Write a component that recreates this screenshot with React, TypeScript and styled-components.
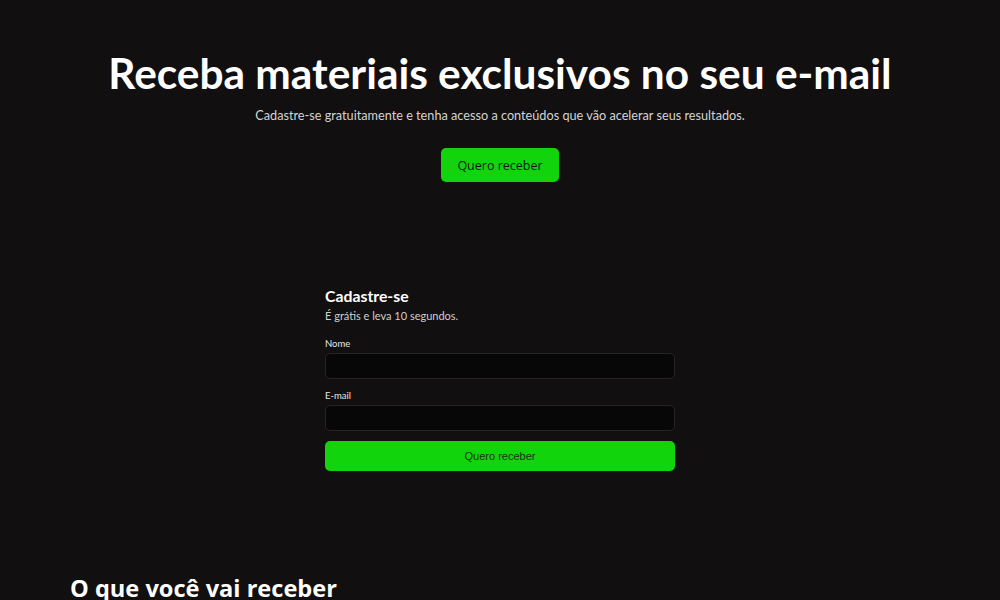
import React from 'react';
import styled, { createGlobalStyle } from 'styled-components';

const GlobalStyle = createGlobalStyle`
  html, body {
    margin: 0;
    padding: 0;
    background: #110f0f;
    color: #fff;
    font-family: 'Lato', 'Open Sans', sans-serif;
  }
`;

const Page = styled.div`
  height: 600px;
  overflow: hidden;
  background: #110f0f;
`;

const Hero = styled.section`
  display: flex;
  flex-direction: column;
  align-items: center;
  padding-top: 48px;
`;

const Title = styled.h1`
  margin: 0;
  font-family: 'Lato', sans-serif;
  font-weight: 700;
  font-size: 42.4px;
  line-height: 50px;
  color: #fff;
`;

const Lead = styled.p`
  margin: 8px 0 0;
  font-size: 12.7px;
  line-height: 18px;
  color: #d4d4d4;
`;

const HeroButton = styled.button`
  margin-top: 24px;
  width: 118px;
  height: 34px;
  border: none;
  border-radius: 5px;
  background: #12d40c;
  color: #0b1a0b;
  font-family: 'Open Sans', sans-serif;
  font-size: 12.5px;
  font-weight: 500;
  cursor: pointer;
`;

const FormSection = styled.section`
  width: 350px;
  margin: 103px auto 0;
`;

const FormTitle = styled.h2`
  margin: 0;
  font-size: 15.8px;
  line-height: 22px;
  font-weight: 700;
  color: #fff;
`;

const FormLead = styled.p`
  margin: 1px 0 0;
  font-size: 11px;
  line-height: 16px;
  color: #cfcfcf;
`;

const Fields = styled.form`
  display: flex;
  flex-direction: column;
  margin-top: 13px;
`;

const Label = styled.label`
  font-size: 9.5px;
  line-height: 13px;
  color: #e6e6e6;
  margin-bottom: 3px;
`;

const Input = styled.input`
  box-sizing: border-box;
  height: 26px;
  width: 100%;
  margin-bottom: 10px;
  background: #080707;
  border: 1px solid #262424;
  border-radius: 5px;
  color: #fff;
  padding: 0 8px;
  outline: none;
`;

const SubmitButton = styled.button`
  height: 30px;
  border: none;
  border-radius: 5px;
  background: #12d40c;
  color: #153015;
  font-family: 'Liberation Sans', Arial, sans-serif;
  font-size: 11px;
  cursor: pointer;
`;

const Benefits = styled.section`
  padding: 0 70px;
  margin-top: 101px;
`;

const BenefitsTitle = styled.h2`
  margin: 0;
  font-family: 'Open Sans', sans-serif;
  font-size: 23.6px;
  line-height: 32px;
  font-weight: 700;
  color: #fff;
`;

export default function App() {
  return (
    <Page>
      <GlobalStyle />
      <Hero>
        <Title>Receba materiais exclusivos no seu e-mail</Title>
        <Lead>Cadastre-se gratuitamente e tenha acesso a conteúdos que vão acelerar seus resultados.</Lead>
        <HeroButton type="button">Quero receber</HeroButton>
      </Hero>
      <FormSection>
        <FormTitle>Cadastre-se</FormTitle>
        <FormLead>É grátis e leva 10 segundos.</FormLead>
        <Fields onSubmit={(e) => e.preventDefault()}>
          <Label htmlFor="nome">Nome</Label>
          <Input id="nome" type="text" />
          <Label htmlFor="email">E-mail</Label>
          <Input id="email" type="email" />
          <SubmitButton type="submit">Quero receber</SubmitButton>
        </Fields>
      </FormSection>
      <Benefits>
        <BenefitsTitle>O que você vai receber</BenefitsTitle>
      </Benefits>
    </Page>
  );
}
